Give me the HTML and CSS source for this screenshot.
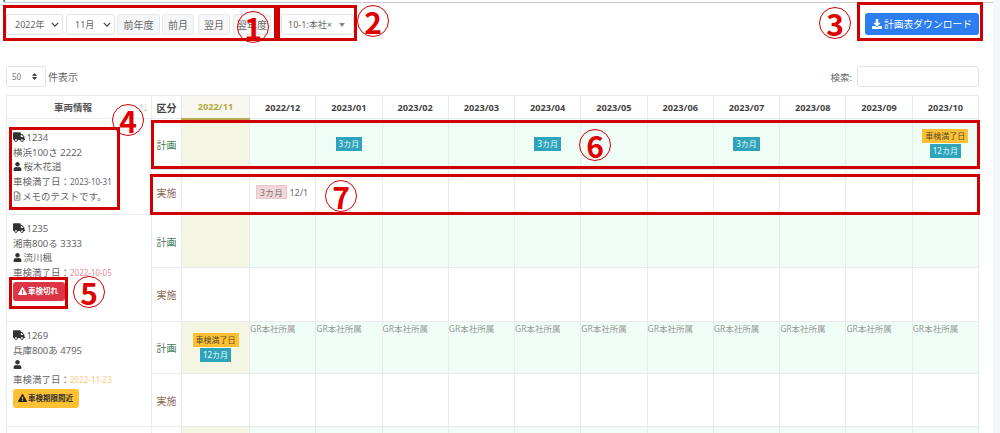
FILE: index.html
```html
<!DOCTYPE html>
<html lang="ja">
<head>
<meta charset="utf-8">
<title>車検計画表</title>
<link rel="stylesheet" href="styles.css">
</head>
<body>
<svg class="defs" aria-hidden="true">
  <symbol id="truck" viewBox="0 0 640 512"><path d="M624 352h-16V243.9c0-12.7-5.1-24.9-14.1-33.9L494 110.1c-9-9-21.2-14.1-33.9-14.1H416V48c0-26.5-21.5-48-48-48H48C21.5 0 0 21.5 0 48v320c0 26.5 21.5 48 48 48h16c0 53 43 96 96 96s96-43 96-96h128c0 53 43 96 96 96s96-43 96-96h48c8.8 0 16-7.2 16-16v-32c0-8.8-7.2-16-16-16zM160 464c-26.5 0-48-21.5-48-48s21.5-48 48-48 48 21.5 48 48-21.5 48-48 48zm320 0c-26.5 0-48-21.5-48-48s21.5-48 48-48 48 21.5 48 48-21.5 48-48 48zm80-208H416V144h44.1l99.9 99.9V256z"/></symbol>
  <symbol id="user" viewBox="0 0 448 512"><path d="M224 256c70.7 0 128-57.3 128-128S294.7 0 224 0 96 57.3 96 128s57.3 128 128 128zm89.6 32h-16.7c-22.2 10.2-46.9 16-72.9 16s-50.6-5.8-72.9-16h-16.7C60.2 288 0 348.2 0 422.4V464c0 26.5 21.5 48 48 48h352c26.5 0 48-21.5 48-48v-41.6c0-74.2-60.2-134.4-134.4-134.4z"/></symbol>
  <symbol id="warn" viewBox="0 0 576 512"><path d="M569.517 440.013C587.975 472.007 564.806 512 527.94 512H48.054c-36.937 0-59.999-40.055-41.577-71.987L246.423 24.035c18.467-32.009 64.72-31.951 83.154 0l239.94 416.001zM288 354c-25.405 0-46 20.595-46 46s20.595 46 46 46 46-20.595 46-46-20.595-46-46-46zm-43.673-165.346l7.418 136c.347 6.364 5.609 11.346 11.982 11.346h48.546c6.373 0 11.635-4.982 11.982-11.346l7.418-136c.375-6.874-5.098-12.654-11.982-12.654h-63.383c-6.884 0-12.356 5.78-11.981 12.654z"/></symbol>
  <symbol id="download" viewBox="0 0 512 512"><path d="M216 0h80c13.3 0 24 10.7 24 24v168h87.7c17.8 0 26.7 21.5 14.1 34.1L269.7 378.3c-7.5 7.5-19.8 7.5-27.3 0L90.1 226.1c-12.6-12.6-3.7-34.1 14.1-34.1H192V24c0-13.3 10.7-24 24-24zm296 376v112c0 13.3-10.7 24-24 24H24c-13.3 0-24-10.7-24-24V376c0-13.3 10.7-24 24-24h146.7l49 49c20.1 20.1 52.5 20.1 72.6 0l49-49H488c13.3 0 24 10.7 24 24z"/></symbol>
  <symbol id="memo" viewBox="0 0 12 14"><path d="M2 .7h5.5L10.3 3.5V13.3H2z M7.3 .7V3.7H10.3 M4 6.5H8.3 M4 8.5H8.3 M4 10.5H8.3" fill="none" stroke="currentColor" stroke-width="1"/></symbol>
</svg>

<main class="card">
  <div class="topline"></div>
  <div class="toolbar">
    <div class="filters">
      <div class="select sel-year">2022年<svg class="chev" viewBox="0 0 10 6"><path d="M1 1l4 4 4-4"/></svg></div>
      <div class="select sel-month">11月<svg class="chev" viewBox="0 0 10 6"><path d="M1 1l4 4 4-4"/></svg></div>
      <button class="btn btn-a">前年度</button>
      <button class="btn btn-b">前月</button>
      <button class="btn btn-c">翌月</button>
      <button class="btn btn-d">翌年度</button>
      <div class="select2">10-1:本社×<span class="caret"></span></div>
    </div>
    <button class="dl"><svg class="ico-dl"><use href="#download"/></svg>計画表ダウンロード</button>
  </div>

  <div class="controls">
    <div class="length"><div class="len-select">50<span class="updown"></span></div>件表示</div>
    <label class="search">検索:<span class="search-input"></span></label>
  </div>

  <table class="plan">
    <colgroup><col class="c-info"><col class="c-kind"><col class="c-now"><col span="11"></colgroup>
    <thead>
      <tr>
        <th class="th-info">車両情報<span class="sort">⇅</span></th><th class="th-kind">区分</th><th class="now-head">2022/11</th><th>2022/12</th><th>2023/01</th><th>2023/02</th><th>2023/03</th><th>2023/04</th><th>2023/05</th><th>2023/06</th><th>2023/07</th><th>2023/08</th><th>2023/09</th><th>2023/10</th>
      </tr>
    </thead>
    <tbody>
      <tr class="r1p plan-row">
        <td rowspan="2" class="info info-first">
          <div><svg class="ico-truck"><use href="#truck"/></svg> 1234</div>
          <div>横浜100さ 2222</div>
          <div><svg class="ico-user"><use href="#user"/></svg> 桜木花道</div>
          <div>車検満了日：<span class="date">2023-10-31</span></div>
          <div><svg class="ico-memo"><use href="#memo"/></svg>メモのテストです。</div>
        </td>
        <td class="kind-plan">計画</td><td class="now"></td><td></td><td><span class="tag tag-info">3カ月</span></td><td></td><td></td><td><span class="tag tag-info">3カ月</span></td><td></td><td></td><td><span class="tag tag-info">3カ月</span></td><td></td><td></td><td><span class="tag tag-warn">車検満了日</span><span class="tag tag-info">12カ月</span></td>
      </tr>
      <tr class="r1a">
        <td class="kind-act">実施</td><td></td><td class="done"><span class="tag-done">3カ月</span> 12/1</td><td></td><td></td><td></td><td></td><td></td><td></td><td></td><td></td><td></td><td></td>
      </tr>
      <tr class="r2p plan-row">
        <td rowspan="2" class="info">
          <div><svg class="ico-truck"><use href="#truck"/></svg> 1235</div>
          <div>湘南800る 3333</div>
          <div><svg class="ico-user"><use href="#user"/></svg> 流川楓</div>
          <div>車検満了日：<span class="date date-red">2022-10-05</span></div>
          <span class="alert alert-red"><svg class="ico-warn"><use href="#warn"/></svg>車検切れ</span>
        </td>
        <td class="kind-plan">計画</td><td class="now"></td><td></td><td></td><td></td><td></td><td></td><td></td><td></td><td></td><td></td><td></td><td></td>
      </tr>
      <tr class="r2a">
        <td class="kind-act">実施</td><td></td><td></td><td></td><td></td><td></td><td></td><td></td><td></td><td></td><td></td><td></td><td></td>
      </tr>
      <tr class="r3p plan-row">
        <td rowspan="2" class="info">
          <div><svg class="ico-truck"><use href="#truck"/></svg> 1269</div>
          <div>兵庫800あ 4795</div>
          <div><svg class="ico-user"><use href="#user"/></svg></div>
          <div>車検満了日：<span class="date date-amber">2022-11-23</span></div>
          <span class="alert alert-amber"><svg class="ico-warn"><use href="#warn"/></svg>車検期限間近</span>
        </td>
        <td class="kind-plan">計画</td><td class="now"><span class="tag tag-warn">車検満了日</span><span class="tag tag-info">12カ月</span></td><td class="gr">GR本社所属</td><td class="gr">GR本社所属</td><td class="gr">GR本社所属</td><td class="gr">GR本社所属</td><td class="gr">GR本社所属</td><td class="gr">GR本社所属</td><td class="gr">GR本社所属</td><td class="gr">GR本社所属</td><td class="gr">GR本社所属</td><td class="gr">GR本社所属</td><td class="gr">GR本社所属</td>
      </tr>
      <tr class="r3a">
        <td class="kind-act">実施</td><td></td><td></td><td></td><td></td><td></td><td></td><td></td><td></td><td></td><td></td><td></td><td></td>
      </tr>
      <tr class="r4p plan-row">
        <td class="info"></td><td class="kind-plan"></td><td class="now"></td><td></td><td></td><td></td><td></td><td></td><td></td><td></td><td></td><td></td><td></td><td></td>
      </tr>
    </tbody>
  </table>
</main>

<div class="mark box-1"></div><div class="mark box-2"></div><div class="mark box-3"></div><div class="mark box-4"></div><div class="mark box-5"></div><div class="mark box-6"></div><div class="mark box-7"></div>
<div class="num num-1">1</div><div class="num num-2">2</div><div class="num num-3">3</div><div class="num num-4">4</div><div class="num num-5">5</div><div class="num num-6">6</div><div class="num num-7">7</div>
</body>
</html>
```
FILE: styles.css
```css
* { box-sizing: border-box; }
html, body { margin: 0; height: 433px; overflow: hidden; }
body {
  position: relative;
  background: #f4f6f9;
  font-family: "Noto Sans", "Noto Sans CJK JP", sans-serif;
  font-size: 9.5px;
  color: #666;
}
.defs { display: none; }
.card { width: 993px; height: 433px; background: #fff; padding: 0 0 0 6px; overflow: hidden; }
.topline { height: 3px; margin: 0 0 0 -3px; border-bottom: 1px solid #c8ccd0; border-left: 2px solid #3a8f9e; border-bottom-left-radius: 3px; }

.toolbar { display: flex; justify-content: space-between; align-items: flex-start; width: 973px; padding-top: 10px; }
.filters { display: flex; align-items: center; margin-top: 1px; }
.select, .select2 {
  display: flex; align-items: center; justify-content: space-between;
  height: 21px; background: #fff; border: 1px solid #dfe2e6; border-radius: 3px;
  font-size: 9px; color: #666;
}
.select { padding: 0 3px 0 8px; }
.sel-year { width: 57px; margin-right: 3px; }
.sel-month { width: 49px; margin-right: 2px; }
.chev { width: 8px; height: 5px; fill: none; stroke: #444; stroke-width: 1.6; }
.btn {
  height: 21px; padding: 0; background: #f6f7f8; border: 1px solid #e6e8ea; border-radius: 3px;
  font: 10px "Noto Sans", "Noto Sans CJK JP", sans-serif; color: #666;
}
.btn-a { width: 43px; margin-right: 2px; }
.btn-b { width: 32px; margin-right: 4px; }
.btn-c { width: 32px; margin-right: 3px; }
.btn-d { width: 38px; margin-right: 10px; }
.select2 { width: 73px; padding: 0 8px 0 6px; }
.caret { border: 3px solid transparent; border-top: 4px solid #888; border-bottom: 0; }
.dl {
  display: flex; align-items: center; justify-content: center; gap: 2px;
  width: 114px; height: 22px; padding: 0;
  background: #2b7df0; border: 0; border-radius: 3px;
  font: 9.8px "Noto Sans", "Noto Sans CJK JP", sans-serif; color: #fff;
}
.ico-dl { width: 10px; height: 10px; fill: #fff; }

.controls { display: flex; justify-content: space-between; align-items: center; width: 973px; margin-top: 31px; font-size: 10px; color: #666; }
.length { display: flex; align-items: center; gap: 2px; }
.len-select { display: flex; align-items: center; justify-content: space-between; width: 40px; height: 21px; padding: 0 8px 0 5px; border: 1px solid #dfe2e6; border-radius: 3px; font-size: 8px; color: #777; }
.updown { width: 5px; height: 7px; background: linear-gradient(#444 0 3px, transparent 3px 4px, #444 4px); clip-path: polygon(50% 0, 100% 40%, 60% 43%, 100% 60%, 50% 100%, 0 60%, 40% 43%, 0 40%); }
.search { display: flex; align-items: center; gap: 5px; font-size: 9.5px; }
.search-input { width: 122px; height: 21px; border: 1px solid #dfe2e6; border-radius: 3px; }

.plan { width: 973px; margin-top: 8px; border-collapse: collapse; table-layout: fixed; }
.c-info { width: 145px; }
.c-kind { width: 30px; }
.c-now { width: 68px; }
.plan th, .plan td { border: 1px solid #e9ecef; padding: 0; text-align: center; vertical-align: middle; }
.plan th { height: 23px; font-size: 9.2px; font-weight: 700; color: #444; position: relative; }
.plan th.th-kind { font-size: 10px; }
.plan th.th-info { font-size: 9.5px; color: #555; padding-right: 12px; }
.sort { position: absolute; right: 3px; top: 5px; font-weight: 400; font-size: 9px; color: #ccc; }
.plan th.now-head { background: #f7f7ef; color: #b3a93f; border-bottom: 2px solid #b9a94f; }

.r1p td { height: 51px; }
.r1a td { height: 45px; }
.r2p td { height: 53px; }
.r2a td { height: 54px; }
.r3p td { height: 52px; }
.r3a td { height: 53px; }
.r4p td { height: 30px; }
.plan-row td { background: #effdf6; }
.plan .plan-row td.now { background: #f5f5e3; }
.plan .plan-row td.info, .plan .plan-row td.kind-plan { background: #fff; }

.plan td.info { vertical-align: top; text-align: left; padding: 7px 0 0 6px; line-height: 14.7px; font-size: 9.5px; color: #666; }
.plan td.info-first { padding-top: 12px; }
.info svg { vertical-align: -1px; }
.ico-truck { width: 12px; height: 10px; fill: #333; margin-right: -1px; }
.ico-user { width: 9px; height: 9px; fill: #333; margin-right: -1px; }
.ico-memo { width: 8px; height: 10px; color: #444; margin-right: 1px; }
.date { font-size: 8px; color: #666; margin-left: 0; }
.date-red { color: #e88a94; }
.date-amber { color: #fdc87a; }
.alert { display: inline-flex; align-items: center; gap: 1px; height: 19px; padding: 0 5px; border-radius: 3px; font-size: 7.5px; font-weight: 700; line-height: 1; vertical-align: top; }
.alert-red { background: #dc3545; color: #fff; fill: #fff; width: 52px; margin-top: 1px; }
.alert-amber { background: #ffc133; color: #333; fill: #222; width: 66px; margin-top: 1px; }
.ico-warn { width: 9px; height: 8px; }

.kind-plan { font-size: 10px; color: #3f7d56; }
.kind-act { font-size: 10px; color: #8c6a55; }
.tag { display: block; width: max-content; margin: 0 auto 1px; padding: 0 3px; height: 14px; line-height: 14px; font-size: 8px; }
.tag-info { background: #2fa3b9; color: #e8fbff; }
.tag-warn { background: #ffc133; color: #554a2a; }
.plan td.done { text-align: left; padding-left: 6px; font-size: 9px; color: #666; }
.tag-done { display: inline-block; padding: 0 3px; height: 14px; line-height: 13px; background: #f3d6da; border: 1px solid #ecc6cb; font-size: 8.5px; color: #777; letter-spacing: .4px; }
.plan td.gr { vertical-align: top; text-align: left; font-size: 8.5px; line-height: 12px; color: #999; white-space: nowrap; padding-top: 1px; }

.mark { position: absolute; border: 3px solid #d00000; }
.box-1 { left: 3px; top: 5px; width: 274px; height: 36px; }
.box-2 { left: 277px; top: 5px; width: 80px; height: 36px; }
.box-3 { left: 857px; top: 2px; width: 126px; height: 39px; }
.box-4 { left: 9px; top: 127px; width: 111px; height: 83px; }
.box-5 { left: 9px; top: 277px; width: 59px; height: 32px; }
.box-6 { left: 151px; top: 120px; width: 829px; height: 49px; }
.box-7 { left: 150px; top: 174px; width: 830px; height: 41px; }
.num {
  position: absolute; width: 32px; height: 32px; border: 1px solid #d00000; border-radius: 50%;
  display: flex; align-items: center; justify-content: center;
  font: 700 30px/1 "Noto Sans CJK JP", sans-serif; color: #e00000;
}
.num-1 { left: 237px; top: 11px; }
.num-2 { left: 357px; top: 5px; }
.num-3 { left: 819px; top: 7px; }
.num-4 { left: 112px; top: 104px; }
.num-5 { left: 73px; top: 276px; }
.num-6 { left: 579px; top: 129px; }
.num-7 { left: 325px; top: 180px; }
```
